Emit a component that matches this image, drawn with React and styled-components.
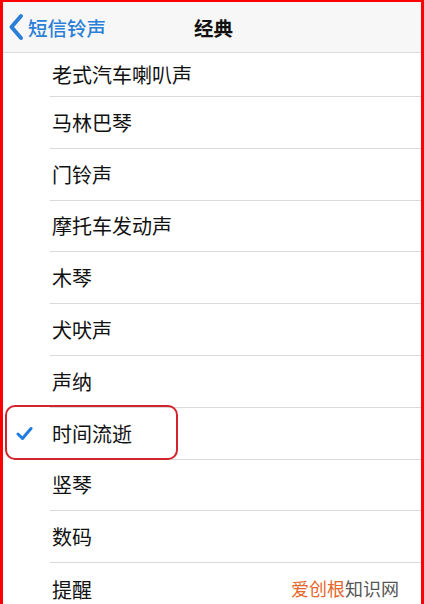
import styled, { createGlobalStyle } from "styled-components";

const GlobalStyle = createGlobalStyle`
  html, body {
    margin: 0;
    padding: 0;
    background: #fff;
  }
  body {
    font-family: "Noto Sans CJK SC", "Noto Sans", sans-serif;
  }
`;

const tones = [
  "老式汽车喇叭声",
  "马林巴琴",
  "门铃声",
  "摩托车发动声",
  "木琴",
  "犬吠声",
  "声纳",
  "时间流逝",
  "竖琴",
  "数码",
  "提醒",
];

const selected = "时间流逝";

export default function App() {
  return (
    <>
      <GlobalStyle />
      <Frame>
        <Header>
          <BackButton>
            <svg width="18" height="28" viewBox="0 0 18 28">
              <path
                d="M14 3 L4.5 14 L14 25"
                fill="none"
                stroke="#2b7fd6"
                strokeWidth="4"
                strokeLinecap="round"
                strokeLinejoin="round"
              />
            </svg>
            <span>短信铃声</span>
          </BackButton>
          <Title>经典</Title>
        </Header>

        <List>
          {tones.map((name, i) => (
            <Row key={name} first={i === 0}>
              <CheckSlot>
                {name === selected && (
                  <svg width="17" height="15" viewBox="0 0 17 15">
                    <path
                      d="M2 8 L6.5 12.5 L15 2.5"
                      fill="none"
                      stroke="#1f7ce0"
                      strokeWidth="3"
                      strokeLinecap="round"
                      strokeLinejoin="round"
                    />
                  </svg>
                )}
              </CheckSlot>
              <Label last={i === tones.length - 1}>{name}</Label>
            </Row>
          ))}
        </List>

        <Highlight />
        <Watermark>
          <em>爱创根</em>知识网
        </Watermark>
      </Frame>
    </>
  );
}

const Frame = styled.div`
  position: relative;
  box-sizing: border-box;
  width: 424px;
  height: 604px;
  overflow: hidden;
  border-top: 2px solid #ff0000;
  border-left: 3px solid #ff0000;
  border-right: 3px solid #ff0000;
  background: #fff;
`;

const Header = styled.div`
  position: relative;
  height: 50px;
  background: #f7f7f7;
  border-bottom: 1px solid #dcdcdc;
  display: flex;
  align-items: center;
  justify-content: center;
`;

const BackButton = styled.div`
  position: absolute;
  left: 4px;
  top: 0;
  bottom: 0;
  display: flex;
  align-items: center;
  gap: 3px;
  color: #2b7fd6;
  font-size: 19.5px;
  font-weight: 500;
`;

const Title = styled.div`
  font-size: 19.5px;
  font-weight: 700;
  color: #111;
  margin-left: 3px;
`;

const List = styled.div`
  display: flex;
  flex-direction: column;
`;

const Row = styled.div`
  display: flex;
  align-items: stretch;
  height: ${(p) => (p.first ? "45px" : "51.8px")};
  margin-top: ${(p) => (p.first ? "-1px" : "0")};
`;

const CheckSlot = styled.div`
  width: 47px;
  flex-shrink: 0;
  display: flex;
  align-items: center;
  justify-content: flex-start;
  padding-left: 13px;
  box-sizing: border-box;
`;

const Label = styled.div`
  flex: 1;
  display: flex;
  align-items: center;
  padding-left: 2px;
  font-size: 20px;
  color: #111;
  border-bottom: ${(p) => (p.last ? "none" : "1px solid #d9d9d9")};
  box-sizing: border-box;
`;

const Highlight = styled.div`
  position: absolute;
  left: 2px;
  top: 403px;
  width: 173px;
  height: 55px;
  box-sizing: border-box;
  border: 2px solid #d3242c;
  border-radius: 10px;
`;

const Watermark = styled.div`
  position: absolute;
  left: 288px;
  top: 573px;
  font-size: 18px;
  color: #555;

  em {
    font-style: normal;
    color: #e4672c;
  }
`;
